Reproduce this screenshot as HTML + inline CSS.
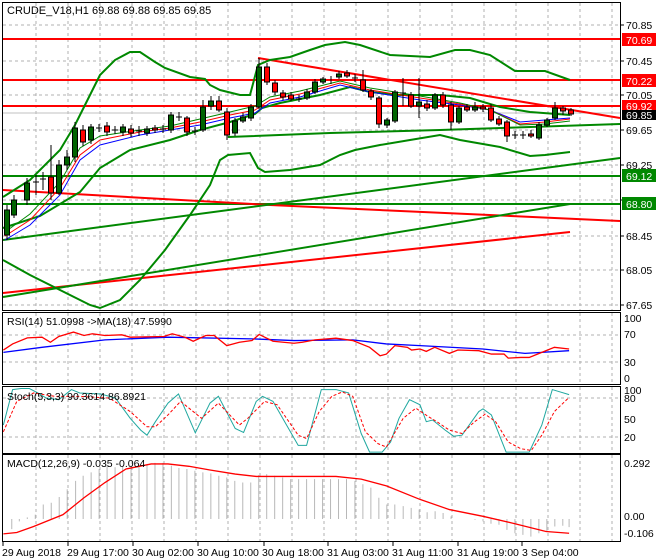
<!DOCTYPE html>
<html><head><meta charset="utf-8"><style>
html,body{margin:0;padding:0;background:#fff;}
svg{display:block;font-family:"Liberation Sans",sans-serif;}
</style></head><body>
<svg width="660" height="560" viewBox="0 0 660 560" xmlns="http://www.w3.org/2000/svg">
<rect width="660" height="560" fill="#fff"/>
<g stroke="#b0b0b0" stroke-dasharray="3,3" stroke-width="1">
<path d="M36 3V310M68 3V310M100 3V310M132 3V310M164 3V310M196 3V310M228 3V310M260 3V310M292 3V310M324 3V310M356 3V310M388 3V310M420 3V310M452 3V310M484 3V310M516 3V310M548 3V310M580 3V310M612 3V310"/>
<path d="M36 313V385M68 313V385M100 313V385M132 313V385M164 313V385M196 313V385M228 313V385M260 313V385M292 313V385M324 313V385M356 313V385M388 313V385M420 313V385M452 313V385M484 313V385M516 313V385M548 313V385M580 313V385M612 313V385"/>
<path d="M36 387V453M68 387V453M100 387V453M132 387V453M164 387V453M196 387V453M228 387V453M260 387V453M292 387V453M324 387V453M356 387V453M388 387V453M420 387V453M452 387V453M484 387V453M516 387V453M548 387V453M580 387V453M612 387V453"/>
<path d="M36 455V541M68 455V541M100 455V541M132 455V541M164 455V541M196 455V541M228 455V541M260 455V541M292 455V541M324 455V541M356 455V541M388 455V541M420 455V541M452 455V541M484 455V541M516 455V541M548 455V541M580 455V541M612 455V541"/>
<path d="M3 25H620M3 61H620M3 95H620M3 130H620M3 165H620M3 200H620M3 236H620M3 270H620M3 305H620"/>
<path d="M3 335H620M3 362H620M3 398H620M3 437H620"/>
</g>
<path d="M3 113H620" stroke="#c0c0c0" stroke-width="1"/>
<g stroke-width="2" fill="none">
<path d="M3 39H620M3 80H620M3 106H620" stroke="#f00"/>
<path d="M3 176H620M3 204H620" stroke="#080"/>
<path d="M258 58L620 118" stroke="#f00"/>
<path d="M3 190L270 205L620 221" stroke="#f00"/>
<path d="M3 293L570 232" stroke="#f00"/>
<path d="M3 240L620 158" stroke="#080"/>
<path d="M3 297L570 204" stroke="#080"/>
<path d="M228 137L330 133L440 130L620 124" stroke="#080"/>
<path d="M3 197L30 180L45 165L60 150L75 125L90 95L100 75L115 60L130 52L140 52L155 62L165 68L190 77L205 79L210 85L220 90L240 95L250 95L258 65L270 60L290 57L310 50L325 45L345 42L360 45L390 55L430 57L455 50L470 50L490 55L515 71L545 71L570 80" stroke="#080"/>
<path d="M3 228L40 216L80 192L100 168L130 150L170 140L200 130L230 122L255 114L262 108L280 103L320 95L350 87L370 92L400 95L440 95L470 98L500 107L530 112L570 115" stroke="#080"/>
<path d="M3 260L30 275L50 285L70 295L90 305L100 308L120 300L140 280L165 250L190 215L210 185L220 160L228 155L250 153L258 168L265 172L290 170L320 165L340 155L355 150L380 145L410 140L440 135L460 140L500 147L530 156L545 155L570 152" stroke="#080"/>
</g>
<g fill="none" stroke-width="1">
<path d="M5 240L30 225L60 195L80 160L100 145L140 135L170 130L200 125L230 118L255 113L270 103L300 97L340 85L370 92L420 100L460 105L490 110L520 122L545 120L570 118" stroke="#00f"/>
<path d="M5 236L30 220L60 188L80 155L100 140L140 132L170 128L200 122L230 115L255 110L270 100L300 94L340 83L370 90L420 98L460 104L490 110L520 124L545 122L570 119" stroke="#f00"/>
<path d="M5 232L30 214L60 182L80 148L100 136L140 130L170 126L200 119L230 112L255 106L270 97L300 91L340 81L370 88L420 96L460 103L490 110L520 125L545 124L570 121" stroke="#080"/>
</g>
<g stroke="#000" stroke-width="1">
<path d="M7 205V240M14 195V218M27 178V205M36 175V195M43 172V190M51 145V200M59 160V195M67 150V170M75 122V162M83 125V146M91 124V144M99 124V132M107 122V136M115 126V134M123 124V136M131 125V137M139 126V136M147 126V136M155 125V133M163 125V133M171 112V133M179 112V121M187 116V136M195 127V135M203 100V132M211 96V110M219 96V112M227 108V140M235 118V136M243 113V123M251 104V121M259 58V109M267 63V85M275 80V95M283 90V100M291 92V101M299 95V102M307 89V100M315 79V94M323 77V84M331 76V84M339 71V79M347 70V78M355 74V82M363 70V92M371 89V100M379 96V128M387 118V128M395 90V123M403 78V106M411 92V108M419 78V118M427 100V111M435 93V110M443 92V108M451 102V130M459 106V124M467 104V112M475 102V112M483 104V112M491 104V122M499 116V126M507 120V142M515 131V139M523 131V139M531 130V138M539 122V140M547 118V127M555 102V120M563 106V115M571 108V116"/>
<g fill="#006400">
<rect x="4.5" y="210" width="5" height="25"/><rect x="11.5" y="200" width="5" height="15"/><rect x="24.5" y="183" width="5" height="17"/><rect x="56.5" y="165" width="5" height="28"/><rect x="64.5" y="157" width="5" height="8"/><rect x="72.5" y="128" width="5" height="29"/><rect x="88.5" y="127" width="5" height="13"/><rect x="120.5" y="127" width="5" height="5"/><rect x="144.5" y="129" width="5" height="4"/><rect x="168.5" y="115" width="5" height="15"/><rect x="200.5" y="107" width="5" height="23"/><rect x="208.5" y="101" width="5" height="5"/><rect x="232.5" y="121" width="5" height="12"/><rect x="240.5" y="117" width="5" height="4"/><rect x="248.5" y="107" width="5" height="11"/><rect x="256.5" y="67" width="5" height="40"/><rect x="304.5" y="92" width="5" height="6"/><rect x="312.5" y="82" width="5" height="10"/><rect x="320.5" y="79" width="5" height="3"/><rect x="336.5" y="74" width="5" height="3"/><rect x="384.5" y="120" width="5" height="5"/><rect x="392.5" y="92" width="5" height="29"/><rect x="416.5" y="102" width="5" height="4"/><rect x="432.5" y="95" width="5" height="13"/><rect x="456.5" y="108" width="5" height="14"/><rect x="472.5" y="107" width="5" height="3"/><rect x="536.5" y="125" width="5" height="13"/><rect x="544.5" y="120" width="5" height="5"/><rect x="552.5" y="108" width="5" height="10"/>
</g>
<g fill="#f00">
<rect x="48.5" y="177" width="5" height="16"/><rect x="80.5" y="130" width="5" height="12"/><rect x="104.5" y="126" width="5" height="6"/><rect x="128.5" y="129" width="5" height="4"/><rect x="152.5" y="128" width="5" height="2"/><rect x="184.5" y="118" width="5" height="14"/><rect x="216.5" y="101" width="5" height="9"/><rect x="224.5" y="112" width="5" height="23"/><rect x="264.5" y="67" width="5" height="15"/><rect x="272.5" y="83" width="5" height="9"/><rect x="280.5" y="93" width="5" height="4"/><rect x="288.5" y="95" width="5" height="4"/><rect x="344.5" y="73" width="5" height="3"/><rect x="360.5" y="80" width="5" height="10"/><rect x="368.5" y="91" width="5" height="6"/><rect x="376.5" y="98" width="5" height="26"/><rect x="408.5" y="95" width="5" height="11"/><rect x="424.5" y="104" width="5" height="4"/><rect x="440.5" y="95" width="5" height="10"/><rect x="448.5" y="105" width="5" height="17"/><rect x="464.5" y="107" width="5" height="3"/><rect x="480.5" y="107" width="5" height="2"/><rect x="488.5" y="108" width="5" height="12"/><rect x="496.5" y="119" width="5" height="5"/><rect x="504.5" y="122" width="5" height="14"/><rect x="528.5" y="134" width="5" height="2"/><rect x="560.5" y="108" width="5" height="3"/><rect x="568.5" y="110" width="5" height="4"/>
</g>
<path d="M33 182H39M40 179H46M96 128H102M112 130H118M136 131H142M160 129H166M176 117H182M192 131H198M296 99H302M352 78H358M400 93H406M512 135H518M520 135H526" />
</g>
<g transform="translate(0,300) scale(0.42,0.338)" fill="none">
<polyline vector-effect="non-scaling-stroke" stroke="#00f" stroke-width="1.3" points="8,155 100,140 250,118 400,110 600,115 700,120 840,118 920,130 1000,135 1150,145 1250,158 1290,155 1355,150"/>
<polyline vector-effect="non-scaling-stroke" stroke="#f00" stroke-width="1.3" points="8,148 30,130 65,112 100,110 120,125 140,108 175,95 200,105 220,100 250,105 290,103 310,110 390,108 410,100 440,110 460,122 490,105 510,105 540,135 570,125 600,120 617,102 650,122 700,128 720,125 750,118 800,113 840,120 880,140 905,165 920,160 940,135 970,140 980,148 1000,145 1015,152 1035,140 1070,158 1090,148 1140,150 1170,160 1200,160 1210,172 1240,170 1260,170 1290,155 1320,140 1355,145"/>
<polyline vector-effect="non-scaling-stroke" stroke="#20a8a0" stroke-width="1" points="8,370 30,265 50,262 70,262 90,275 110,290 140,295 170,265 190,275 240,278 275,290 310,350 335,385 350,400 370,360 400,305 425,278 465,393 500,305 520,285 560,380 580,392 610,300 625,285 650,300 710,430 730,430 765,265 800,265 830,275 860,395 880,450 910,450 930,420 950,350 975,295 1000,310 1015,360 1030,355 1060,385 1080,403 1100,400 1140,330 1150,322 1170,340 1205,450 1260,450 1290,370 1315,265 1355,280"/>
<polyline vector-effect="non-scaling-stroke" stroke="#f00" stroke-width="1" stroke-dasharray="3,2" points="8,390 40,300 80,275 130,285 190,285 260,290 310,330 350,375 370,375 400,340 430,300 480,350 520,305 570,370 590,350 630,300 660,310 710,400 730,410 760,330 790,285 815,272 840,285 870,390 900,425 920,435 960,350 990,320 1020,345 1040,360 1070,385 1100,395 1130,360 1155,338 1180,360 1210,420 1240,440 1265,445 1290,400 1320,330 1355,288"/>
<path vector-effect="non-scaling-stroke" stroke="#b8b8b8" stroke-width="1" d="M28 648V678M46 648V655M65 648V643M84 648V635M103 648V605M122 648V600M141 648V583M160 648V560M180 648V535M198 648V520M217 648V510M236 648V500M255 648V490M274 648V495M292 648V490M312 648V490M331 648V488M350 648V485M369 648V482M388 648V482M408 648V490M426 648V497M445 648V500M464 648V505M483 648V510M502 648V513M521 648V520M540 648V525M559 648V535M578 648V540M597 648V540M616 648V518M635 648V515M654 648V520M673 648V525M692 648V530M711 648V530M730 648V530M749 648V530M768 648V530M787 648V530M806 648V530M825 648V530M845 648V535M864 648V545M883 648V555M902 648V585M921 648V605M940 648V605M960 648V610M979 648V615M998 648V620M1017 648V628M1036 648V625M1055 648V630M1074 648V640M1131 648V650M1150 648V655M1169 648V662M1188 648V665M1207 648V680M1226 648V690M1245 648V695M1264 648V700M1283 648V690M1302 648V685M1321 648V670M1340 648V668M1355 648V672"/>
<polyline vector-effect="non-scaling-stroke" stroke="#f00" stroke-width="1.3" points="8,692 40,688 80,670 150,635 200,585 250,540 300,500 360,485 400,485 450,492 500,503 560,515 610,522 700,522 800,522 860,530 920,550 1000,590 1070,620 1150,640 1220,660 1300,685 1355,690"/>
</g>
<g fill="none" stroke="#000" stroke-width="1">
<rect x="2.5" y="2.5" width="618" height="308"/>
<rect x="2.5" y="312.5" width="618" height="72"/>
<rect x="2.5" y="386.5" width="618" height="67"/>
<rect x="2.5" y="454.5" width="618" height="87"/>
<path d="M620 25h4M620 61h4M620 95h4M620 130h4M620 165h4M620 200h4M620 236h4M620 270h4M620 305h4M3 542v4M68 542v4M133 542v4M198 542v4M264 542v4M328 542v4M393 542v4M458 542v4M522 542v4"/>
</g>
<g font-size="11" fill="#000">
<text x="7" y="14">CRUDE_V18,H1  69.88 69.88 69.85 69.85</text>
<text x="7" y="325" font-size="10.5">RSI(14) 51.0998  -&gt;MA(18) 47.5990</text>
<text x="7" y="400" font-size="10.5">Stoch(5,3,3) 90.3614 86.8921</text>
<text x="7" y="467" font-size="10.5">MACD(12,26,9) -0.035 -0.064</text>
</g>
<g font-size="10.5" fill="#000">
<text x="626" y="29">70.85</text><text x="626" y="65">70.45</text><text x="626" y="99">70.05</text><text x="626" y="134">69.65</text><text x="626" y="169">69.25</text><text x="626" y="240">68.45</text><text x="626" y="274">68.05</text><text x="626" y="309">67.65</text>
<text x="624" y="322">100</text><text x="624" y="338">70</text><text x="624" y="366">30</text><text x="624" y="382">0</text>
<text x="624" y="394">100</text><text x="624" y="402">80</text><text x="624" y="423">50</text><text x="624" y="441">20</text>
<text x="624" y="467">0.292</text><text x="624" y="520">0.00</text><text x="624" y="537">-0.106</text>
<text x="2" y="556">29 Aug 2018</text><text x="67" y="556">29 Aug 17:00</text><text x="132" y="556">30 Aug 02:00</text><text x="197" y="556">30 Aug 10:00</text><text x="262" y="556">30 Aug 18:00</text><text x="327" y="556">31 Aug 03:00</text><text x="392" y="556">31 Aug 11:00</text><text x="457" y="556">31 Aug 19:00</text><text x="522" y="556">3 Sep 04:00</text>
</g>
<g font-size="10.5" fill="#fff">
<rect x="622" y="33" width="34" height="13" fill="#f00"/><text x="626" y="44">70.69</text>
<rect x="622" y="74" width="34" height="13" fill="#f00"/><text x="626" y="85">70.22</text>
<rect x="622" y="100" width="34" height="13" fill="#f00"/><text x="626" y="110">69.92</text>
<rect x="622" y="110" width="34" height="10" fill="#000"/><text x="626" y="119">69.85</text>
<rect x="622" y="169" width="34" height="13" fill="#080"/><text x="626" y="180">69.12</text>
<rect x="622" y="197" width="34" height="13" fill="#080"/><text x="626" y="208">68.80</text>
</g>
</svg>
</body></html>
